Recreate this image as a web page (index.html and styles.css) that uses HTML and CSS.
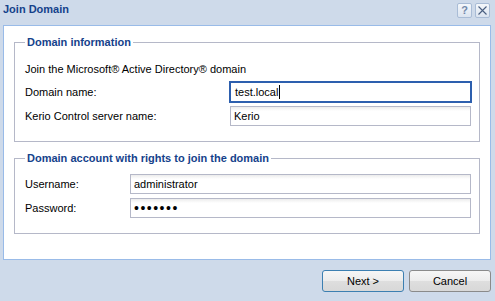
FILE: index.html
```html
<!DOCTYPE html>
<html lang="en">
<head>
    <meta charset="UTF-8">
    <title>Join Domain</title>
    <link rel="stylesheet" href="styles.css">
</head>
<body>
    <div class="window">
        <div class="titlebar">
            <span class="title">Join Domain</span>
            <div class="tools">
                <span class="tool tool-help">?</span>
                <span class="tool tool-close">
                    <svg width="9" height="9" viewBox="0 0 9 9">
                        <path d="M0.5 0.5 L8.5 8.5 M8.5 0.5 L0.5 8.5" stroke="#4a5f80" stroke-width="1.1" fill="none"/>
                    </svg>
                </span>
            </div>
        </div>

        <div class="panel">
            <fieldset class="group">
                <legend>Domain information</legend>
                <p class="intro">Join the Microsoft® Active Directory® domain</p>
                <div class="rows rows-wide">
                    <label>Domain name:</label>
                    <div class="field focused" role="textbox">test.local<span class="caret"></span></div>
                    <label for="server">Kerio Control server name:</label>
                    <input type="text" id="server" class="field" value="Kerio">
                </div>
            </fieldset>

            <fieldset class="group">
                <legend>Domain account with rights to join the domain</legend>
                <div class="rows rows-narrow">
                    <label for="user">Username:</label>
                    <input type="text" id="user" class="field" value="administrator">
                    <label for="pass">Password:</label>
                    <input type="password" id="pass" class="field field-pass" value="secret1">
                </div>
            </fieldset>
        </div>

        <div class="footer">
            <button class="btn btn-default">Next &gt;</button>
            <button class="btn">Cancel</button>
        </div>
    </div>
</body>
</html>
```

FILE: styles.css
```css
body {
    margin: 0;
    font-family: "Liberation Sans", Arial, sans-serif;
    font-size: 11px;
    color: #000;
    background-color: #cedaea;
}

.window {
    width: 495px;
    height: 301px;
    display: flex;
    flex-direction: column;
    background-color: #cedaea;
}

.titlebar {
    height: 25px;
    display: flex;
    justify-content: space-between;
    align-items: flex-start;
    padding: 0 5px 0 3px;
    box-sizing: border-box;
}

.title {
    font-weight: bold;
    color: #15428b;
    line-height: 13px;
    padding-top: 3px;
}

.tools {
    display: flex;
    gap: 3px;
    margin-top: 3px;
}

.tool {
    width: 15px;
    height: 15px;
    box-sizing: border-box;
    border: 1px solid #a9bcd6;
    border-radius: 2px;
    background: linear-gradient(#f4f7fb, #dbe4f0);
    display: flex;
    align-items: center;
    justify-content: center;
}

.tool-help {
    font-weight: bold;
    font-size: 11px;
    color: #7288aa;
    line-height: 13px;
}

.panel {
    margin: 0 4px 0 3px;
    height: 235px;
    box-sizing: border-box;
    background-color: #fff;
    border: 1px solid #99bbe8;
    padding: 9px 10px 0 10px;
}

.group {
    margin: 0;
    border: 1px solid #b5b8c8;
    padding: 0 8px 15px 10px;
    min-width: 0;
}

.group + .group {
    margin-top: 9px;
}

.group legend {
    padding: 0 2px;
    font-weight: bold;
    color: #15428b;
    line-height: 14px;
}

.intro {
    margin: 13px 0 0 0;
    line-height: 14px;
}

.rows {
    display: grid;
    row-gap: 4px;
    align-items: center;
    margin-top: 6px;
}

.rows-wide {
    grid-template-columns: 205px 1fr;
}

.rows-narrow {
    grid-template-columns: 105px 1fr;
    margin-top: 9px;
}

.field {
    height: 20px;
    box-sizing: border-box;
    margin: 0;
    border: 1px solid #b5b8c8;
    padding: 0 3px;
    font-family: "Liberation Sans", Arial, sans-serif;
    font-size: 11px;
    color: #000;
    background: linear-gradient(#ececec, #fff 4px);
    outline: none;
}

.field.focused {
    display: flex;
    align-items: center;
    padding-left: 4px;
    border-color: #2d5fae;
    box-shadow: 0 0 0 1px #2d5fae;
    background: #fff;
}

.caret {
    width: 1px;
    height: 14px;
    margin-left: 1px;
    background-color: #000;
}

.field-pass {
    font-size: 14px;
    letter-spacing: 1.5px;
}

.footer {
    display: flex;
    justify-content: flex-end;
    gap: 5px;
    margin-top: 10px;
    padding-right: 4px;
}

.btn {
    width: 82px;
    height: 22px;
    margin: 0;
    padding: 0;
    border: 1px solid #8a8a8a;
    border-radius: 3px;
    background: linear-gradient(#f6f6f6 0%, #ececec 50%, #dedede 51%, #d8d8d8 100%);
    font-family: "Liberation Sans", Arial, sans-serif;
    font-size: 11px;
    color: #000;
}

.btn-default {
    border-color: #3c7fb1;
}
```
